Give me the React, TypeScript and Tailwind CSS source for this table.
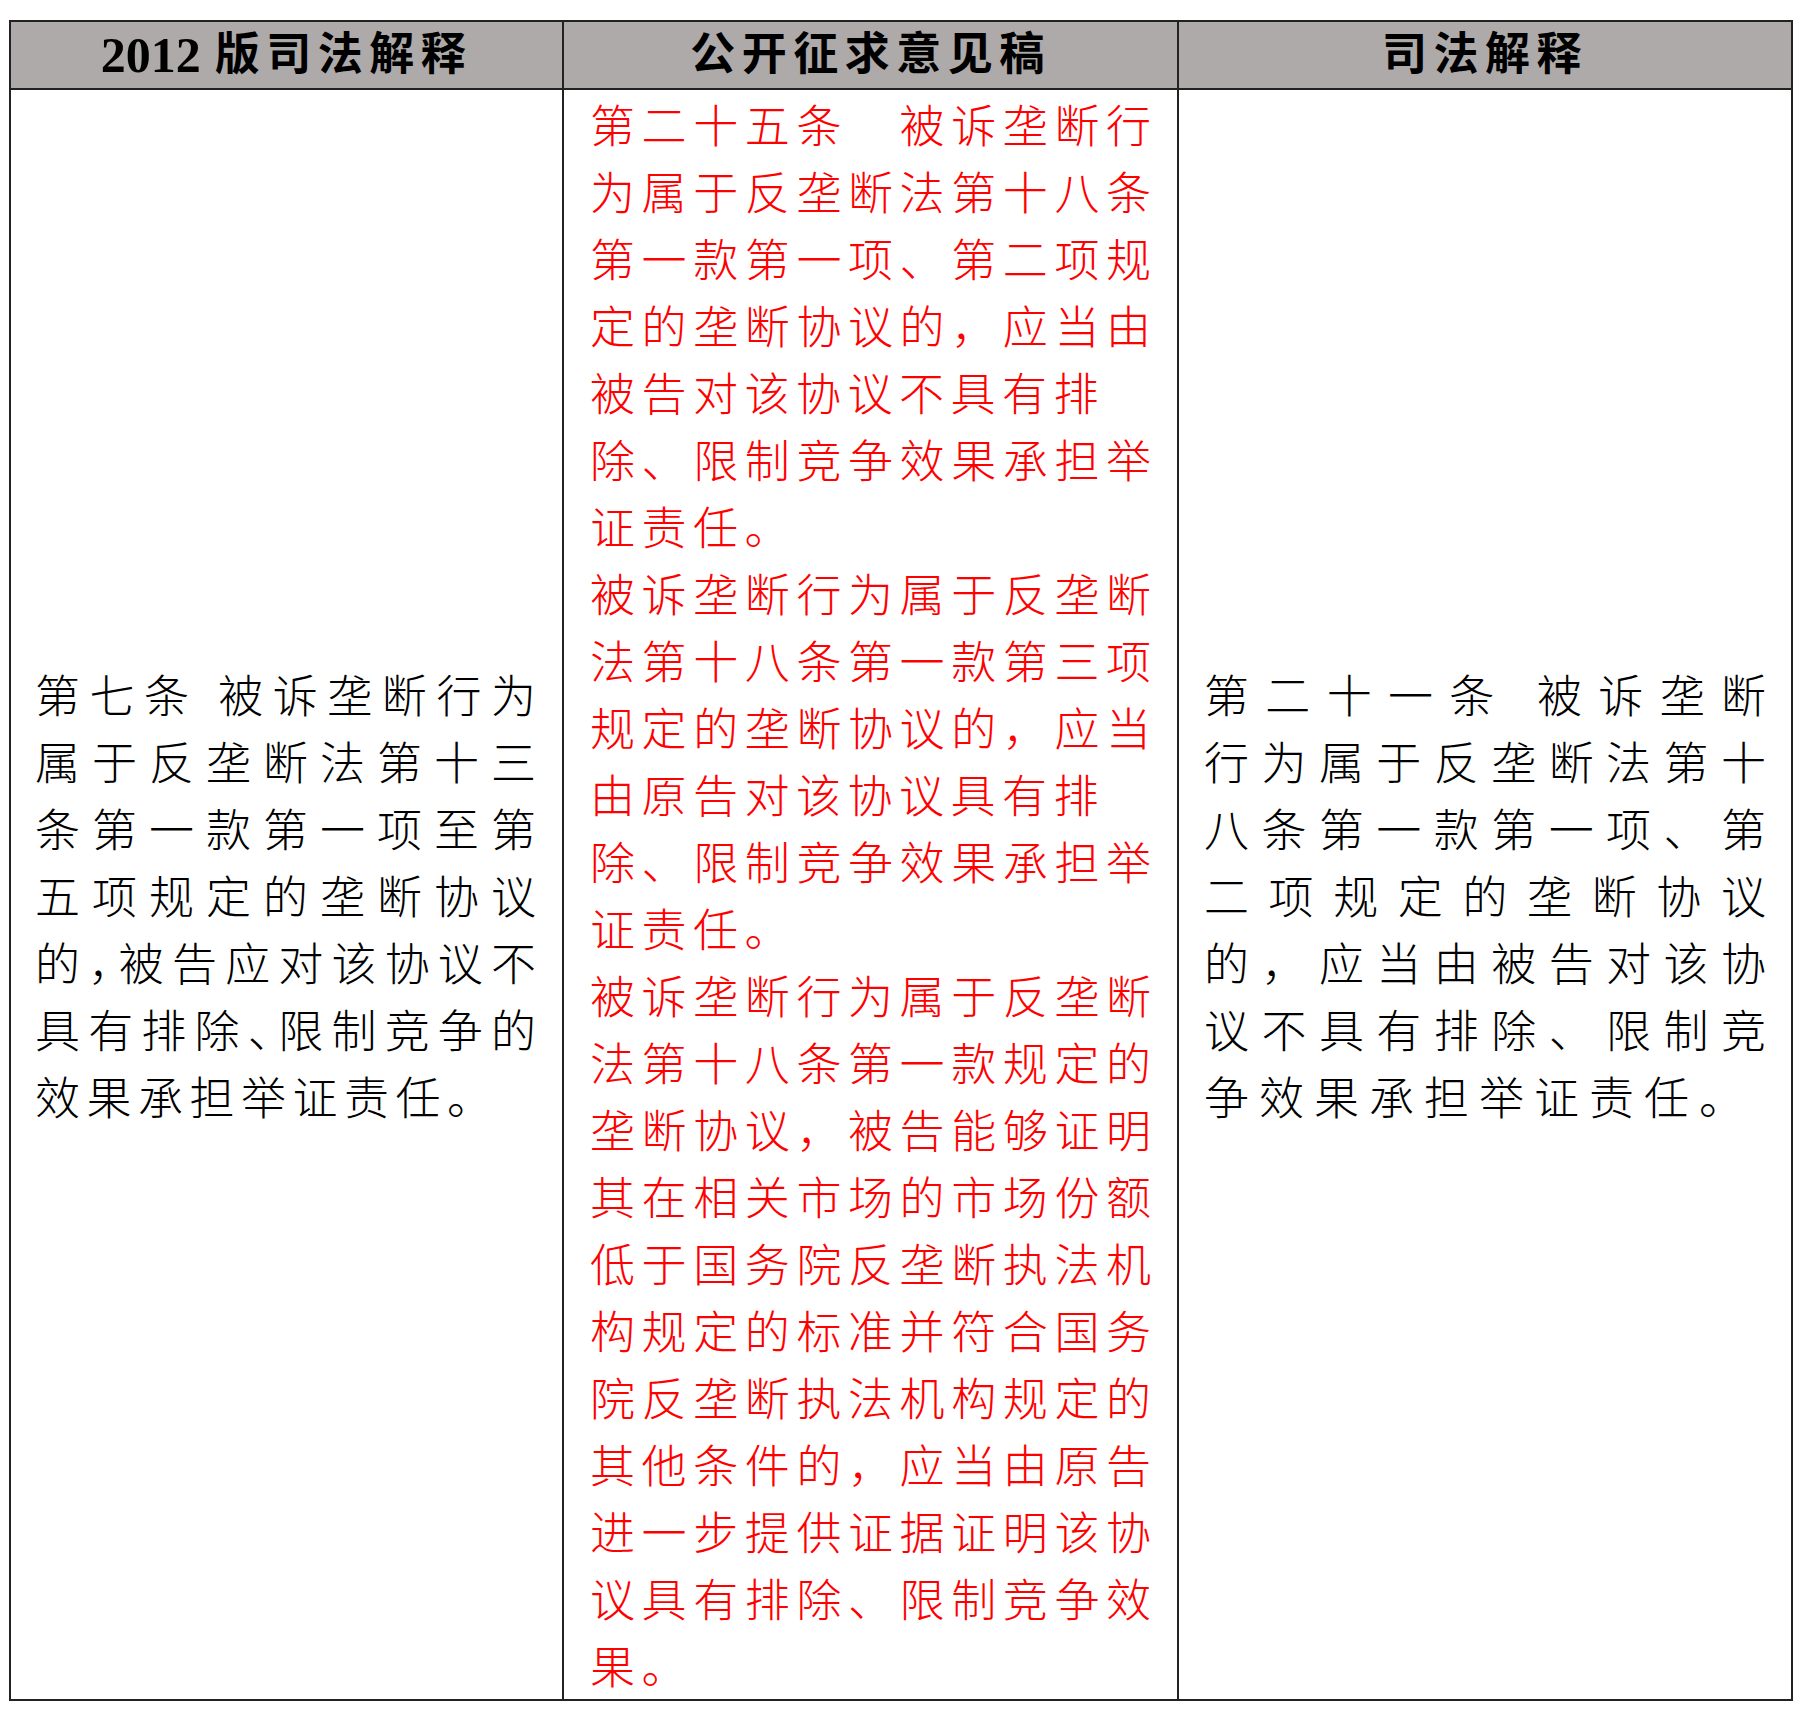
import React from "react";

type Ln = { t: React.ReactNode; j?: boolean; wide?: boolean };

// half-width punctuation (Word compresses these in the narrow column)
const Half = ({ c }: { c: string }) => (
  <span className="[font-feature-settings:'halt']">{c}</span>
);

const oldRule: Ln[] = [
  { t: "第七条 被诉垄断行为", j: true },
  { t: "属于反垄断法第十三", j: true },
  { t: "条第一款第一项至第", j: true },
  { t: "五项规定的垄断协议", j: true },
  { t: <>的<Half c="，" />被告应对该协议不</>, j: true },
  { t: <>具有排除<Half c="、" />限制竞争的</>, j: true },
  { t: "效果承担举证责任。" },
];

const draft: Ln[] = [
  { t: "第二十五条　被诉垄断行", j: true },
  { t: "为属于反垄断法第十八条", j: true },
  { t: "第一款第一项、第二项规", j: true },
  { t: "定的垄断协议的，应当由", j: true },
  { t: "被告对该协议不具有排" },
  { t: "除、限制竞争效果承担举", j: true },
  { t: "证责任。" },
  { t: "被诉垄断行为属于反垄断", j: true },
  { t: "法第十八条第一款第三项", j: true },
  { t: "规定的垄断协议的，应当", j: true },
  { t: "由原告对该协议具有排" },
  { t: "除、限制竞争效果承担举", j: true },
  { t: "证责任。" },
  { t: "被诉垄断行为属于反垄断", j: true },
  { t: "法第十八条第一款规定的", j: true },
  { t: "垄断协议，被告能够证明", j: true },
  { t: "其在相关市场的市场份额", j: true },
  { t: "低于国务院反垄断执法机", j: true },
  { t: "构规定的标准并符合国务", j: true },
  { t: "院反垄断执法机构规定的", j: true },
  { t: "其他条件的，应当由原告", j: true },
  { t: "进一步提供证据证明该协", j: true },
  { t: "议具有排除、限制竞争效", j: true },
  { t: "果。" },
];

const newRule: Ln[] = [
  { t: "第二十一条 被诉垄断", j: true },
  { t: "行为属于反垄断法第十", j: true },
  { t: "八条第一款第一项、第", j: true },
  { t: "二项规定的垄断协议", j: true },
  { t: "的，应当由被告对该协", j: true },
  { t: "议不具有排除、限制竞", j: true },
  { t: "争效果承担举证责任。", wide: true },
];

const Lines = ({ lines }: { lines: Ln[] }) => (
  <>
    {lines.map((l, i) => (
      <div
        key={i}
        className={
          l.j
            ? "whitespace-nowrap text-justify [text-align-last:justify] -mr-[6.5px]"
            : l.wide
              ? "whitespace-nowrap tracking-[10px]"
              : "whitespace-nowrap"
        }
      >
        {l.t}
      </div>
    ))}
  </>
);

export default function App() {
  return (
    <div className="min-h-[1720px] w-[1802px] bg-white pt-[20px] pl-[9px]">
      <div className="w-[1784px] border-2 border-[#222222] font-['Noto_Sans_CJK_SC',sans-serif] text-[45px] leading-[67px] tracking-[6.5px]">
        {/* header row */}
        <div className="flex h-[68px] border-b-2 border-[#222222] bg-[#aeaaaa] font-['Liberation_Serif','Noto_Sans_CJK_SC',serif] font-bold text-black">
          <div className="flex w-[551px] items-center justify-center">
            <span className="text-[50px] tracking-normal">2012</span>
            <span className="ml-[14px]">版司法解释</span>
          </div>
          <div className="flex w-[615px] items-center justify-center border-l-2 border-[#222222]">
            公开征求意见稿
          </div>
          <div className="flex flex-1 items-center justify-center border-l-2 border-[#222222]">
            司法解释
          </div>
        </div>

        {/* body row */}
        <div className="flex font-light">
          <div className="flex w-[551px] flex-col justify-center pl-[24px] pr-[26px] text-black">
            <Lines lines={oldRule} />
          </div>
          <div className="w-[615px] border-l-2 border-[#222222] pl-[26px] pr-[26px] pb-[1px] text-[#ff0000]">
            <Lines lines={draft} />
          </div>
          <div className="flex flex-1 flex-col justify-center border-l-2 border-[#222222] pl-[25px] pr-[25px] text-black">
            <Lines lines={newRule} />
          </div>
        </div>
      </div>
    </div>
  );
}
